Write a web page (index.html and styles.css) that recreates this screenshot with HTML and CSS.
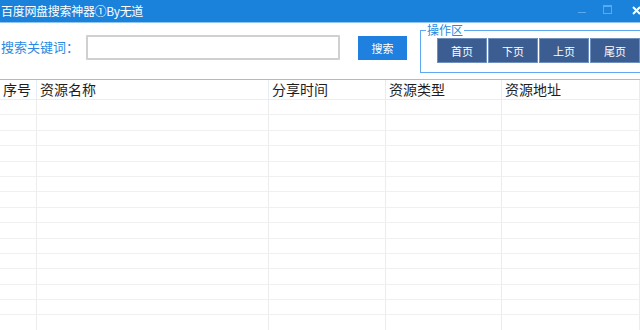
FILE: index.html
```html
<!DOCTYPE html>
<html lang="zh-CN">
<head>
  <meta charset="UTF-8">
  <title>百度网盘搜索神器①By无道</title>
  <link rel="stylesheet" href="styles.css">
</head>
<body>
  <div class="window">
    <div class="titlebar">
      <span class="title">百度网盘搜索神器①By无道</span>
      <div class="controls">
        <svg class="ctl min" width="8" height="8" viewBox="0 0 8 8"><path d="M0 4.5H8" stroke="#5ea9ec" stroke-width="1"/></svg>
        <svg class="ctl max" width="9" height="9" viewBox="0 0 9 9"><rect x="0.5" y="0.5" width="8" height="8" fill="none" stroke="#5ea9ec"/><path d="M0 1.5H9" stroke="#5ea9ec"/></svg>
        <svg class="ctl close" width="9" height="9" viewBox="0 0 9 9"><path d="M1 1L8 8M8 1L1 8" stroke="#fff" stroke-width="2"/></svg>
      </div>
    </div>

    <div class="toolbar">
      <label class="label" for="kw">搜索关键词：</label>
      <input class="keyword" id="kw" type="text">
      <button class="search">搜索</button>
      <div class="group">
        <span class="legend">操作区</span>
        <button class="page">首页</button>
        <button class="page">下页</button>
        <button class="page">上页</button>
        <button class="page">尾页</button>
      </div>
    </div>

    <div class="grid">
      <div class="row head">
        <span>序号</span><span>资源名称</span><span>分享时间</span><span>资源类型</span><span>资源地址</span>
      </div>
      <div class="row"><span></span><span></span><span></span><span></span><span></span></div>
      <div class="row"><span></span><span></span><span></span><span></span><span></span></div>
      <div class="row"><span></span><span></span><span></span><span></span><span></span></div>
      <div class="row"><span></span><span></span><span></span><span></span><span></span></div>
      <div class="row"><span></span><span></span><span></span><span></span><span></span></div>
      <div class="row"><span></span><span></span><span></span><span></span><span></span></div>
      <div class="row"><span></span><span></span><span></span><span></span><span></span></div>
      <div class="row"><span></span><span></span><span></span><span></span><span></span></div>
      <div class="row"><span></span><span></span><span></span><span></span><span></span></div>
      <div class="row"><span></span><span></span><span></span><span></span><span></span></div>
      <div class="row"><span></span><span></span><span></span><span></span><span></span></div>
      <div class="row"><span></span><span></span><span></span><span></span><span></span></div>
      <div class="row"><span></span><span></span><span></span><span></span><span></span></div>
      <div class="row"><span></span><span></span><span></span><span></span><span></span></div>
      <div class="row"><span></span><span></span><span></span><span></span><span></span></div>
    </div>
  </div>
</body>
</html>
```

FILE: styles.css
```css
body {
  margin: 0;
  font-family: "Noto Sans CJK SC", "Noto Sans", sans-serif;
}

.window {
  width: 640px;
  height: 330px;
  overflow: hidden;
  background: #fff;
}

.titlebar {
  height: 22px;
  background: #1a82da;
  border-bottom: 1px solid #8fc5f0;
  display: flex;
  align-items: center;
  justify-content: space-between;
}

.title {
  color: #fff;
  font-size: 12px;
  line-height: 22px;
  padding-left: 1px;
  letter-spacing: -0.3px;
}

.controls {
  display: flex;
  align-items: center;
  height: 22px;
}

.ctl.min {
  margin-right: 17px;
  margin-top: 1px;
}

.ctl.max {
  margin-right: 20px;
  margin-top: -3px;
}

.ctl.close {
  margin-right: -1px;
  margin-top: -2px;
}

.toolbar {
  height: 56px;
  display: flex;
  align-items: flex-start;
}

.label {
  flex: none;
  width: 86px;
  margin-top: 14px;
  padding-left: 1px;
  box-sizing: border-box;
  white-space: nowrap;
  color: #2a8ae2;
  font-size: 13px;
  line-height: 20px;
}

.keyword {
  flex: none;
  box-sizing: border-box;
  width: 254px;
  height: 25px;
  margin: 12px 0 0 0;
  border: 2px solid #d0d0d0;
  border-radius: 1px;
  background: #fff;
  outline: none;
}

.search {
  flex: none;
  width: 49px;
  height: 24px;
  margin: 13px 0 0 18px;
  border: none;
  background: #1f80e0;
  color: #fff;
  font-family: inherit;
  font-size: 11px;
  padding: 0;
}

.group {
  position: relative;
  box-sizing: border-box;
  flex: 1;
  height: 43px;
  margin: 7px 0 0 13px;
  border: 1px solid #5ea9ef;
  border-right: none;
  display: flex;
  gap: 1px;
  padding: 7px 0 0 16px;
}

.legend {
  position: absolute;
  top: -8px;
  left: 5px;
  padding: 0 1px;
  background: #fff;
  color: #2a8ae2;
  font-size: 12px;
  line-height: 14px;
}

.page {
  box-sizing: border-box;
  width: 50px;
  height: 25px;
  flex: none;
  border: 1px solid #6f8fbd;
  background: #3b5d92;
  color: #fff;
  font-family: inherit;
  font-size: 11px;
  padding: 0;
}

.grid {
  border-top: 1px solid #b8b8b8;
}

.row {
  display: grid;
  grid-template-columns: 37px 232px 117px 116px 1fr;
  height: 15.4px;
  box-sizing: border-box;
  border-bottom: 1px solid #f0f0f0;
}

.row span {
  border-right: 1px solid #ececec;
}

.row.head {
  height: 20px;
  border-bottom: 1px solid #e6eef8;
}

.row.head span {
  border-right-color: #e4ecf6;
  padding-left: 3px;
  font-size: 14px;
  line-height: 19px;
  color: #1e1e1e;
}
```
